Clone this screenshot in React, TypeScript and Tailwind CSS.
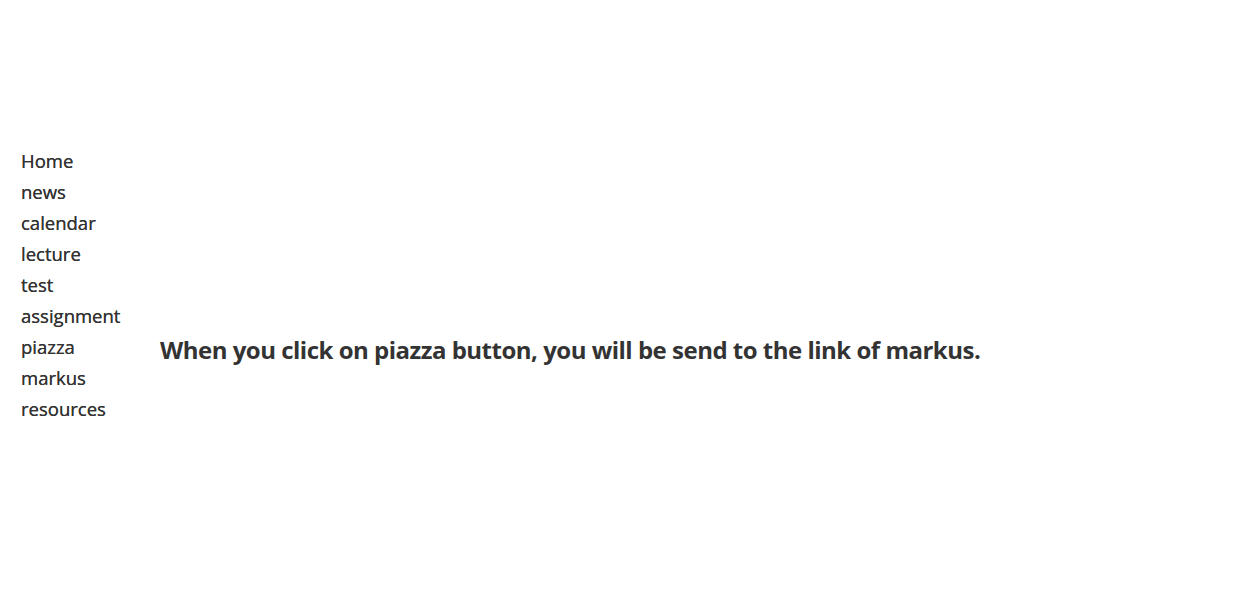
export default function App() {
  const links = ["Home", "news", "calendar", "lecture", "test", "assignment", "piazza", "markus", "resources"];

  return (
    <div className="min-h-[600px] w-full bg-white text-[#333333]" style={{ fontFamily: '"Open Sans", "Noto Sans", sans-serif' }}>
      <div className="flex pt-[145px]">
        {/* Side nav */}
        <nav className="w-[160px] shrink-0 pl-[21px]">
          <ul className="flex flex-col">
            {links.map((l) => (
              <li key={l} className="text-[18.5px] leading-[31px] [text-shadow:0_0_0.4px_#333]">
                <a href="#">{l}</a>
              </li>
            ))}
          </ul>
        </nav>

        {/* Content */}
        <main className="pt-[189px]">
          <h1 className="text-[24px] font-bold leading-[32px] tracking-[-0.5px]">
            When you click on piazza button, you will be send to the link of markus.
          </h1>
        </main>
      </div>
    </div>
  );
}
